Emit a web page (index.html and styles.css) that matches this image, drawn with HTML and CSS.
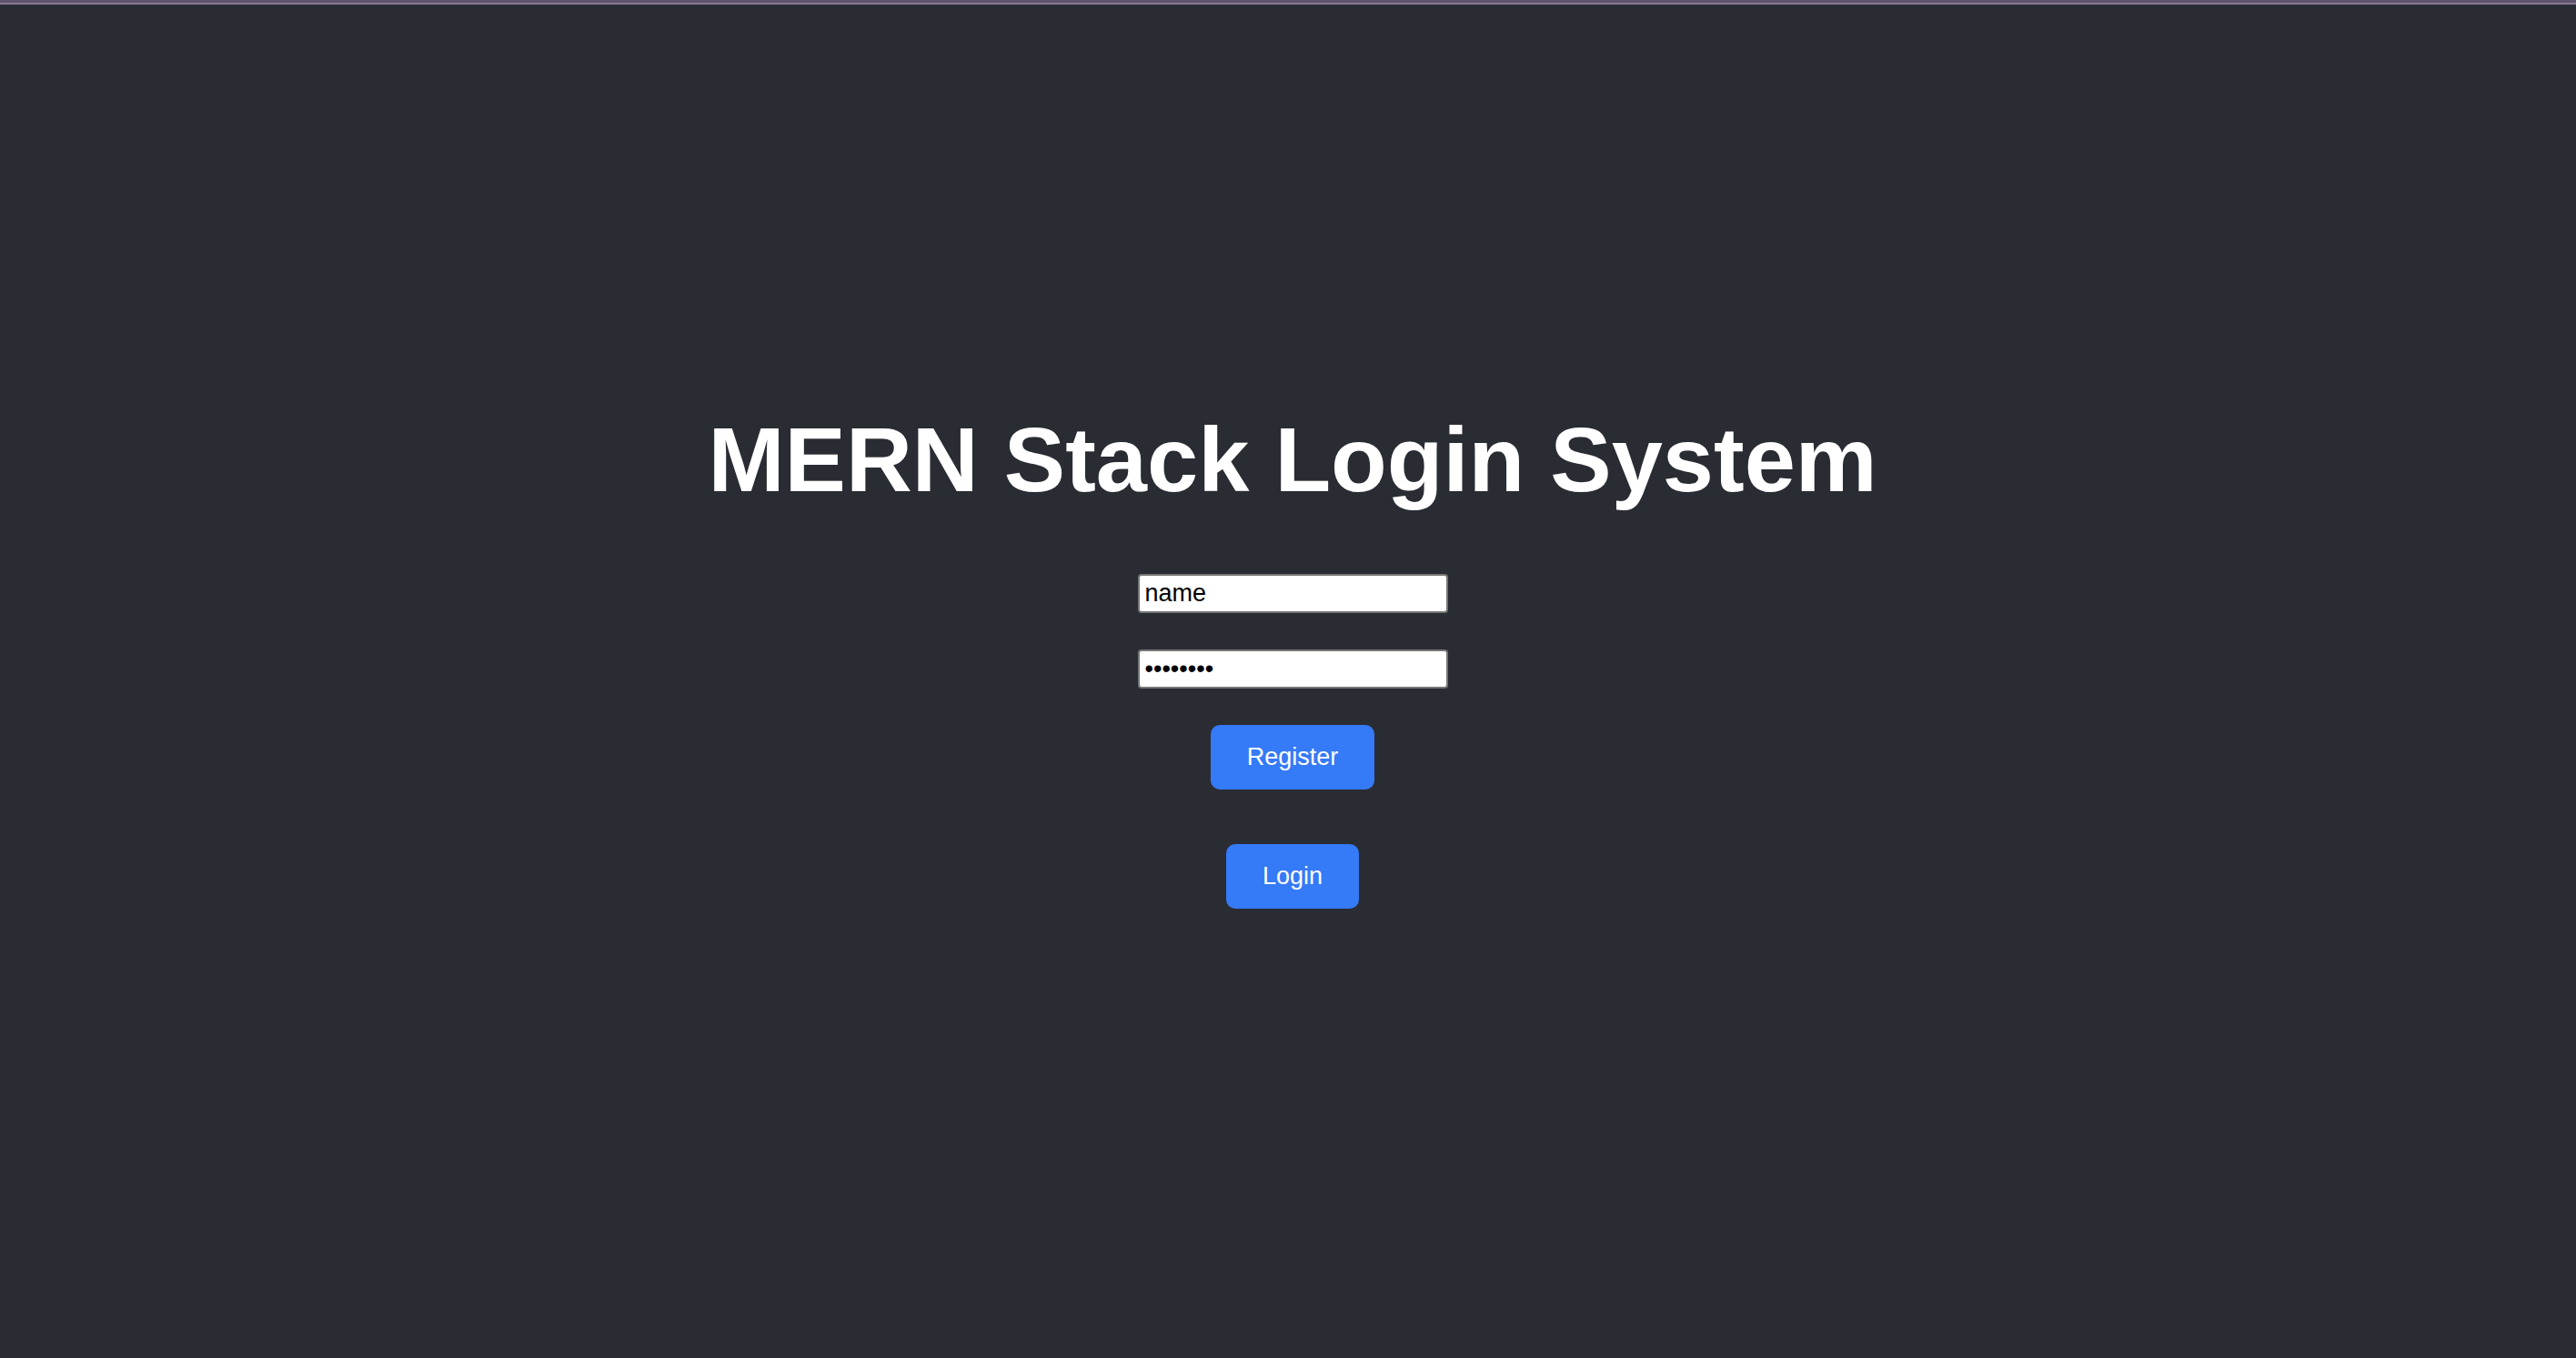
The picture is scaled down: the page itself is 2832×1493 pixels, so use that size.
FILE: index.html
```html
<!DOCTYPE html>
<html lang="en">
<head>
<meta charset="utf-8">
<title>MERN Stack Login System</title>
<link rel="stylesheet" href="styles.css">
</head>
<body>
<main class="page">
  <h1 class="title">MERN Stack Login System</h1>
  <form class="form">
    <input class="field" type="text" value="name" aria-label="Name">
    <input class="field" type="password" value="password" aria-label="Password">
    <div class="actions">
      <button class="button" type="button">Register</button>
      <button class="button" type="button">Login</button>
    </div>
  </form>
</main>
</body>
</html>
```
FILE: styles.css
```css
*,
*::before {
  box-sizing: border-box;
}

body {
  margin: 0;
  min-height: 100vh;
  display: flex;
  flex-direction: column;
  background: #2a2c34;
  color: #fff;
  font-family: "Liberation Sans", Arial, sans-serif;
}

/* Two-tone strip along the top edge */
body::before {
  content: "";
  height: 5px;
  background: #5e5470;
  border-bottom: 2px solid #85798f;
}

.page {
  flex: 1;
  display: flex;
  flex-direction: column;
  align-items: center;
  justify-content: center;
  gap: 70px;
  padding: 0 0 50px 10px;
}

.title {
  margin: 0;
  font-size: 101px;
  line-height: 112px;
  text-align: center;
}

.form,
.actions {
  display: flex;
  flex-direction: column;
  align-items: center;
  gap: 40px;
}

.actions {
  gap: 60px;
}

.field {
  width: 341px;
  height: 43px;
  padding: 2px 6px;
  border: 2px solid #767676;
  border-radius: 4px;
  background: #fff;
  color: #000;
  font: 27px "Liberation Sans", Arial, sans-serif;
}

.button {
  height: 71px;
  padding: 0 40px;
  border: 0;
  border-radius: 10px;
  background: #357af6;
  color: #fff;
  font: 27px "Liberation Sans", Arial, sans-serif;
  cursor: pointer;
}
```
